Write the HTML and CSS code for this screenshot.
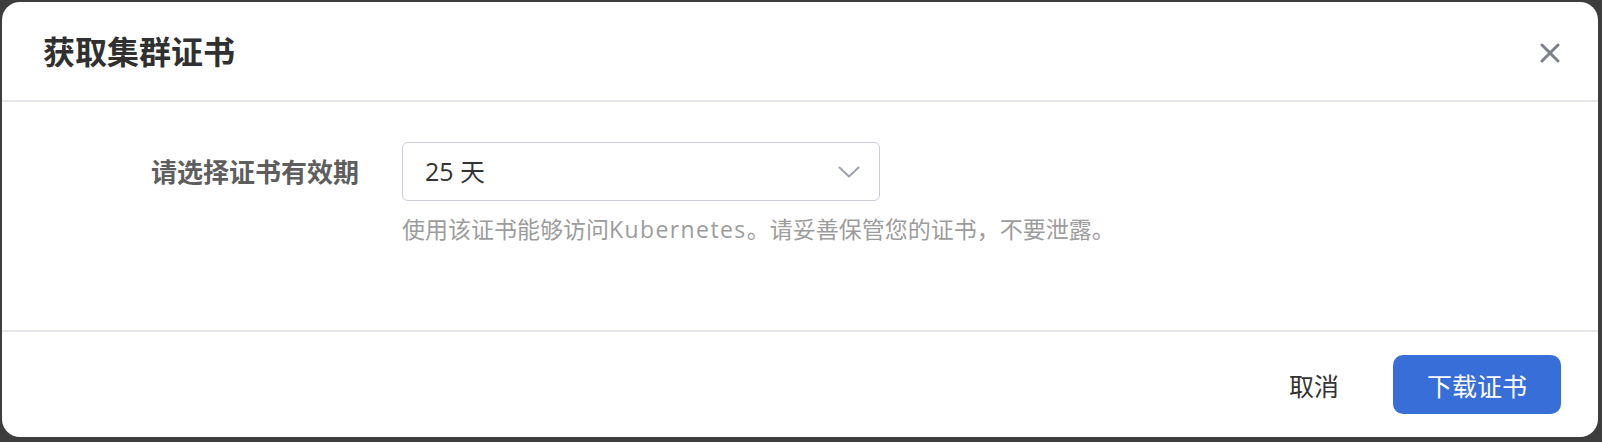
FILE: index.html
```html
<!DOCTYPE html>
<html lang="zh-CN">
<head>
<meta charset="utf-8">
<title>获取集群证书</title>
<link rel="stylesheet" href="styles.css">
</head>
<body>
<div class="dialog">
  <div class="dialog-header">
    <h1 class="dialog-title">获取集群证书</h1>
    <button class="close-btn" aria-label="关闭">
      <svg width="20" height="20" viewBox="0 0 20 20"><path d="M2 2 L18 18 M18 2 L2 18" stroke="#7b8089" stroke-width="3" stroke-linecap="round" fill="none"/></svg>
    </button>
  </div>
  <div class="dialog-body">
    <div class="form-row">
      <label class="form-label">请选择证书有效期</label>
      <div class="form-control">
        <div class="select">
          <span class="select-value">25 天</span>
          <svg class="chevron" width="22" height="12" viewBox="0 0 22 12"><path d="M1.5 1.5 L11 10.5 L20.5 1.5" stroke="#9ea2aa" stroke-width="2" fill="none" stroke-linecap="round" stroke-linejoin="round"/></svg>
        </div>
        <p class="form-desc">使用该证书能够访问<span class="latin">Kubernetes</span>。请妥善保管您的证书，不要泄露。</p>
      </div>
    </div>
  </div>
  <div class="dialog-footer">
    <button class="btn btn-text">取消</button>
    <button class="btn btn-primary">下载证书</button>
  </div>
</div>
</body>
</html>
```

FILE: styles.css
```css
html, body {
  margin: 0;
  padding: 0;
}
body {
  background: #3d3d3d;
  width: 1602px;
  height: 442px;
  overflow: hidden;
  padding: 2px 4px 0 2px;
  box-sizing: border-box;
  font-family: "Open Sans", "Noto Sans CJK SC", sans-serif;
}
.dialog {
  width: 1596px;
  height: 435px;
  background: #fff;
  border-radius: 18px;
  display: flex;
  flex-direction: column;
  overflow: hidden;
}
.dialog-header {
  height: 98px;
  border-bottom: 2px solid #e6e6ec;
  display: flex;
  align-items: center;
  justify-content: space-between;
  padding: 0 38px 0 41px;
  flex-shrink: 0;
}
.dialog-title {
  margin: 0 0 2px 0;
  font-family: "Noto Sans CJK SC", sans-serif;
  font-size: 32px;
  font-weight: 700;
  color: #303030;
  line-height: 1;
}
.close-btn {
  border: 0;
  background: none;
  padding: 0;
  width: 20px;
  height: 20px;
  display: flex;
  margin-top: 4px;
}
.dialog-body {
  flex: 1;
  padding-top: 40px;
}
.form-row {
  display: flex;
  align-items: flex-start;
  gap: 43px;
}
.form-label {
  width: 357px;
  text-align: right;
  font-family: "Noto Sans CJK SC", sans-serif;
  font-size: 26px;
  font-weight: 600;
  color: #5e5e5e;
  line-height: 59px;
  margin-top: -1px;
}
.form-control {
  width: 478px;
}
.select {
  height: 59px;
  box-sizing: border-box;
  border: 1.5px solid #cacdd6;
  border-radius: 6px;
  display: flex;
  align-items: center;
  justify-content: space-between;
  padding: 0 19px 0 22px;
}
.select-value {
  font-size: 25px;
  color: #333;
  line-height: 1;
}
.chevron {
  display: block;
}
.form-desc {
  margin: 12px 0 0 0;
  font-size: 23px;
  line-height: 32px;
  color: #9c9c9c;
  white-space: nowrap;
}
.latin {
  letter-spacing: 1.4px;
}
.dialog-footer {
  height: 107px;
  border-top: 2px solid #e6e6ec;
  display: flex;
  align-items: center;
  justify-content: flex-end;
  padding: 0 37px 0 0;
  box-sizing: border-box;
  flex-shrink: 0;
}
.btn {
  font-family: "Noto Sans CJK SC", sans-serif;
  border: 0;
  cursor: pointer;
}
.btn-text {
  background: none;
  font-size: 25px;
  color: #333;
  padding: 0;
  margin-right: 54px;
}
.btn-primary {
  width: 168px;
  height: 59px;
  background: #376ed7;
  color: #fff;
  font-size: 25px;
  border-radius: 10px;
}
```
